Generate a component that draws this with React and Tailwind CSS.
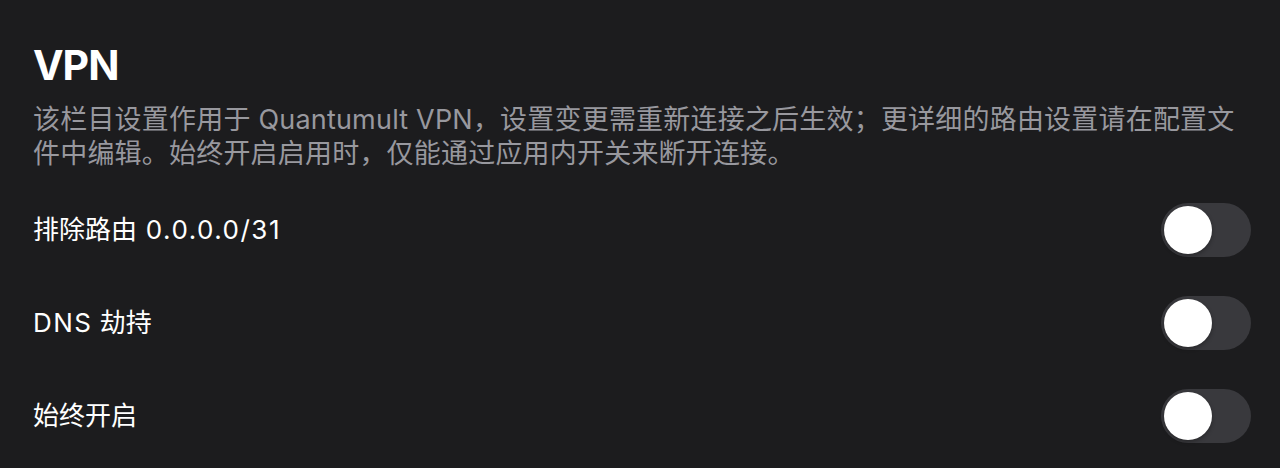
import React, { useState } from 'react';

const FONT = { fontFamily: 'Inter, "Noto Sans CJK SC", sans-serif' };

function Toggle({ on, onChange }) {
  return (
    <button
      type="button"
      onClick={() => onChange(!on)}
      className={`relative w-[90px] h-[54px] rounded-full p-[3px] flex items-center transition-colors ${on ? 'bg-[#34c759] justify-end' : 'bg-[#39393d] justify-start'}`}
    >
      <span className="block w-[48px] h-[48px] rounded-full bg-white shadow-[0_2px_4px_rgba(0,0,0,0.3)]" />
    </button>
  );
}

export default function App() {
  const [settings, setSettings] = useState({
    exclude: false,
    dns: false,
    always: false
  });

  const rows = [
    { key: 'exclude', cjk: '排除路由', latin: ' 0.0.0.0/31', latinFirst: false },
    { key: 'dns', cjk: ' 劫持', latin: 'DNS', latinFirst: true },
    { key: 'always', cjk: '始终开启', latin: '', latinFirst: false }
  ];

  return (
    <div className="w-[1280px] h-[468px] bg-[#1c1c1e] overflow-hidden" style={FONT}>
      <div className="pl-[33px] pr-[29px] pt-[40px]">
        <h1 className="text-[41px] leading-[50px] font-bold text-white tracking-tight">VPN</h1>
        <p className="mt-[13px] text-[27px] leading-[34px] text-[#98989e] pr-[8px] tracking-[0.2px]">
          该栏目设置作用于 Quantumult VPN，设置变更需重新连接之后生效；更详细的路由设置请在配置文件中编辑。始终开启启用时，仅能通过应用内开关来断开连接。
        </p>
        <div className="mt-[12px]">
          {rows.map(row => (
            <div key={row.key} className="h-[93px] flex items-center justify-between">
              <span className="text-[26px] text-white font-normal whitespace-pre">
                {row.latinFirst && <span className="tracking-[1.5px]">{row.latin}</span>}
                {row.cjk}
                {!row.latinFirst && row.latin && <span className="tracking-[1.5px]">{row.latin}</span>}
              </span>
              <Toggle
                on={settings[row.key]}
                onChange={v => setSettings(prev => ({ ...prev, [row.key]: v }))}
              />
            </div>
          ))}
        </div>
      </div>
    </div>
  );
}
